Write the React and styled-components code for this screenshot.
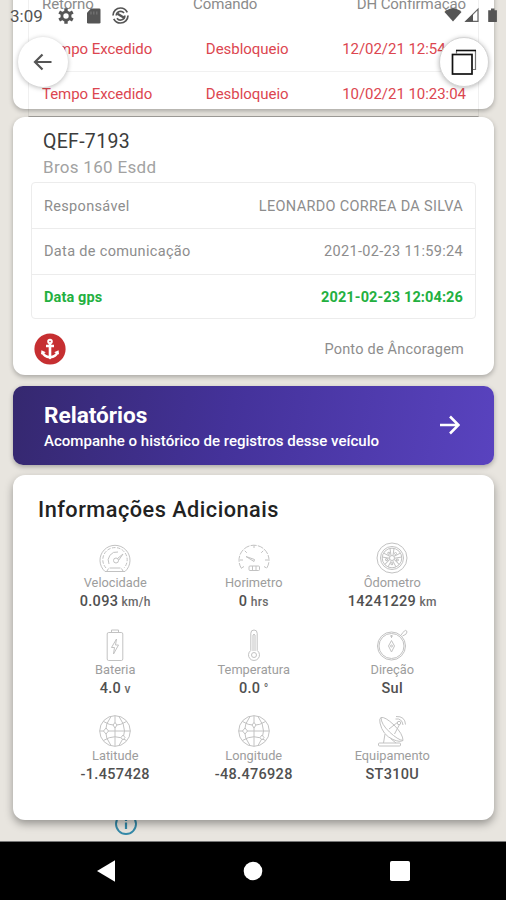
import styled, { createGlobalStyle } from "styled-components";

const history = [
  { type: "Tempo Excedido", command: "Desbloqueio", date: "12/02/21 12:54:39" },
  { type: "Tempo Excedido", command: "Desbloqueio", date: "10/02/21 10:23:04" },
];

const infos = [
  { label: "Velocidade", value: "0.093", unit: "km/h", icon: <SpeedIcon /> },
  { label: "Horimetro", value: "0", unit: "hrs", icon: <HourIcon /> },
  { label: "Ôdometro", value: "14241229", unit: "km", icon: <WheelIcon /> },
  { label: "Bateria", value: "4.0", unit: "v", icon: <BatteryIcon /> },
  { label: "Temperatura", value: "0.0", unit: "°", icon: <ThermoIcon /> },
  { label: "Direção", value: "Sul", icon: <CompassIcon /> },
  { label: "Latitude", value: "-1.457428", icon: <GlobeIcon /> },
  { label: "Longitude", value: "-48.476928", icon: <GlobeIcon /> },
  { label: "Equipamento", value: "ST310U", icon: <DishIcon /> },
];

export default function App() {
  return (
    <>
      <GlobalStyle />
      <Screen>
        <Content>
          <HistoryCard>
            <HistoryTable>
              <HistoryRow $header>
                <span>Retorno</span>
                <span>Comando</span>
                <span>DH Confirmação</span>
              </HistoryRow>
              {history.map((entry) => (
                <HistoryRow key={entry.date}>
                  <span>{entry.type}</span>
                  <span>{entry.command}</span>
                  <span>{entry.date}</span>
                </HistoryRow>
              ))}
            </HistoryTable>
          </HistoryCard>

          <VehicleCard>
            <Plate>QEF-7193</Plate>
            <Model>Bros 160 Esdd</Model>
            <DataBox>
              <DataRow>
                <span>Responsável</span>
                <span>LEONARDO CORREA DA SILVA</span>
              </DataRow>
              <DataRow>
                <span>Data de comunicação</span>
                <span>2021-02-23 11:59:24</span>
              </DataRow>
              <DataRow $active>
                <span>Data gps</span>
                <span>2021-02-23 12:04:26</span>
              </DataRow>
            </DataBox>
            <AnchorRow>
              <AnchorIcon />
              <span>Ponto de Âncoragem</span>
            </AnchorRow>
          </VehicleCard>

          <ReportCard>
            <div>
              <ReportTitle>Relatórios</ReportTitle>
              <ReportText>
                Acompanhe o histórico de registros desse veículo
              </ReportText>
            </div>
            <svg width="20" height="20" viewBox="0 0 20 20" fill="none">
              <path
                d="M0 10H18M10 1.5L18.5 10L10 18.5"
                stroke="#fff"
                strokeWidth="2.6"
              />
            </svg>
          </ReportCard>

          <InfoCard>
            <InfoTitle>Informações Adicionais</InfoTitle>
            <InfoGrid>
              {infos.map((info) => (
                <InfoItem key={info.label}>
                  {info.icon}
                  <InfoLabel>{info.label}</InfoLabel>
                  <InfoValue>
                    {info.value}
                    {info.unit && <small> {info.unit}</small>}
                  </InfoValue>
                </InfoItem>
              ))}
            </InfoGrid>
          </InfoCard>

          <MapInfo width="24" height="24" viewBox="0 0 24 24" fill="none">
            <circle cx="12" cy="12" r="10" stroke="#3489a8" strokeWidth="1.9" />
            <path d="M12 7v2M12 10.5v6.5" stroke="#3489a8" strokeWidth="2.2" />
          </MapInfo>
        </Content>

        <NavBar>
          <svg width="20" height="22" viewBox="0 0 20 22" fill="#fff">
            <path d="M0 11L18 0.3V21.7Z" />
          </svg>
          <svg width="20" height="20" viewBox="0 0 20 20" fill="#fff">
            <circle cx="10" cy="10" r="9.3" />
          </svg>
          <svg width="20" height="20" viewBox="0 0 20 20" fill="#fff">
            <rect width="20" height="20" rx="1.8" />
          </svg>
        </NavBar>

        <StatusBar>
          <Clock>3:09</Clock>
          <StatusIcons />
          <SignalIcons />
        </StatusBar>
        <RoundButton $left="18px" aria-label="Voltar">
          <svg width="20" height="18" viewBox="0 0 20 18" fill="none">
            <path
              d="M18.5 9H2.500M9.500 1.500L2 9L9.500 16.500"
              stroke="#555"
              strokeWidth="2.2"
            />
          </svg>
        </RoundButton>
        <RoundButton $left="439px" $outlined aria-label="Camadas">
          <svg width="26" height="26" viewBox="0 0 26 26" fill="none">
            <path d="M5.500 4.500V1.500M24.500 1.500V20.500H22" stroke="#777" strokeWidth="1.2" />
            <path d="M5 1.500H25" stroke="#111" strokeWidth="1.6" />
            <rect x="1.500" y="5.500" width="19.500" height="19.500" fill="#fff" stroke="#111" strokeWidth="1.7" />
          </svg>
        </RoundButton>
      </Screen>
    </>
  );
}

function StatusIcons() {
  return (
    <svg width="72" height="18" viewBox="0 0 72 18">
      <g stroke="#555" fill="none">
        <circle cx="8" cy="9" r="4.1" strokeWidth="2.8" />
        <path
          d="M8 1.2v3M8 13.8v3M1.2 5.1l2.7 1.5M12.1 11.4l2.7 1.5M1.2 12.9l2.7-1.5M12.1 6.6l2.7-1.5"
          strokeWidth="3.4"
        />
      </g>
      <path
        d="M33 1.5h8.2q1.3 0 1.3 1.3v12.4q0 1.3-1.3 1.3H30.3q-1.3 0-1.3-1.3V5.8Z"
        fill="#555"
      />
      <path d="M33 4.5v3M35.8 4.5v3M38.8 4.5v3" stroke="#777" strokeWidth="1.2" />
      <g stroke="#555" fill="none">
        <circle cx="62.5" cy="8.5" r="7.5" strokeWidth="1.7" strokeDasharray="20 3.5" />
        <path d="M58.3 8.500A4.300 4.300 0 0 1 66 6M66.800 8.500A4.300 4.300 0 0 1 59 11.200" strokeWidth="1.7" />
        <path d="M59.500 6.800L66.500 11" strokeWidth="2.4" />
      </g>
    </svg>
  );
}

function SignalIcons() {
  return (
    <SignalSvg width="54" height="18" viewBox="0 0 54 18">
      <path d="M.5 5Q9-2.500 17.500 5L9 14.500Z" fill="#555" />
      <path d="M34 2.200V14.400H21.800Z" fill="none" stroke="#666" strokeWidth="1.2" />
      <path d="M29 7V14.500H21Z" fill="#555" />
      <path d="M47 1.500h3.500v1.700h2.400v11.300q0 .5-.5.500h-7.700q-.5 0-.5-.5V3.200H47Z" fill="#555" />
    </SignalSvg>
  );
}

function AnchorIcon() {
  return (
    <svg width="32" height="32" viewBox="0 0 32 32" fill="none">
      <circle cx="16" cy="16" r="15.6" fill="#c62f31" />
      <circle cx="16" cy="8.500" r="1.800" stroke="#fff" strokeWidth="2" />
      <path d="M16 10.500V24M12 13H20" stroke="#fff" strokeWidth="2.600" />
      <path d="M8.600 19.500Q10 23.600 16 24.300Q22 23.600 23.400 19.500" stroke="#fff" strokeWidth="2.400" />
      <path d="M7 21.600L7.400 17.200L11.800 19.200ZM25 21.600L24.600 17.200L20.200 19.200ZM13.500 24L16 26.500L18.500 24Z" fill="#fff" />
    </svg>
  );
}

function SpeedIcon() {
  return (
    <LineIcon viewBox="0 0 32 32">
      <path d="M6 29.500A15 15 0 1 1 26 29.500Z" />
      <path d="M7 26A12.200 12.200 0 1 1 25 26" strokeDasharray="3.500 1.500" />
      <path d="M10 22A8.500 8.500 0 0 1 19 10" />
      <circle cx="17" cy="18.500" r="2.500" />
      <path d="M18.500 16.500L24 12L19.500 18.500M10.500 26H21.500M8 29L9.500 26.500M24 29L22.500 26.500" />
    </LineIcon>
  );
}

function HourIcon() {
  return (
    <LineIcon viewBox="0 0 32 32">
      <path d="M3.500 26.500A15 15 0 1 1 28.500 26.500" strokeDasharray="6 1.200" />
      <path d="M16 3v3M6.800 8.800l2 2M25.200 8.800l-2 2M2 18h3M27 18h3M3.500 26l2.500-1.500M28.500 26l-2.500-1.500" />
      <path d="M8 14.500L16.500 17.500L16 19.500Z" />
      <rect x="11" y="24" width="10.500" height="4.500" rx="1" />
      <path d="M14.500 24v4.500M18 24v4.500" />
    </LineIcon>
  );
}

function WheelIcon() {
  const angles = [0, 72, 144, 216, 288];
  return (
    <LineIcon viewBox="0 0 32 32">
      <circle cx="16" cy="16" r="15" />
      <circle cx="16" cy="16" r="11.500" />
      <circle cx="16" cy="16" r="9.800" />
      <circle cx="16" cy="16" r="2.500" />
      {angles.map((angle) => (
        <g key={angle} transform={`rotate(${angle} 16 16)`}>
          <path d="M15 13.500L14 6.500M17 13.500L18 6.500" />
          <circle cx="19.500" cy="11.500" r="1" />
        </g>
      ))}
    </LineIcon>
  );
}

function BatteryIcon() {
  return (
    <LineIcon viewBox="0 0 32 32">
      <rect x="8.200" y="3.500" width="15.600" height="28" rx="1.500" />
      <path d="M12.500 3.500V1H19.500V3.500" />
      <path d="M17.500 10L12.500 18.500H15.500L14.500 25L19.500 16H16.500Z" />
    </LineIcon>
  );
}

function ThermoIcon() {
  return (
    <LineIcon viewBox="0 0 32 32">
      <path d="M12.800 21.500V4.300Q12.800 1 16 1Q19.200 1 19.200 4.300V21.500A5.500 5.500 0 1 1 12.800 21.500Z" />
      <path d="M15 22V6Q16 4.500 17 6V22" />
      <circle cx="16" cy="26" r="2.500" />
    </LineIcon>
  );
}

function CompassIcon() {
  return (
    <LineIcon viewBox="0 0 32 32">
      <circle cx="15.500" cy="17" r="14" />
      <circle cx="15.500" cy="17" r="12.500" />
      <path d="M15.500 11.500L18.500 17L15.500 23L12.500 17ZM15.500 6v3M14 7h3M25 6L27 3.500Q30-.5 31 3Q31 5.500 26.500 7" />
      <circle cx="15.500" cy="17" r="1" />
    </LineIcon>
  );
}

function GlobeIcon() {
  return (
    <LineIcon viewBox="0 0 32 32">
      <circle cx="16" cy="16" r="15.300" />
      <path d="M16 .7V31.300M.7 16H31.300M4.500 6.500Q16 14 27.500 6.500M4.500 25.500Q16 18 27.500 25.500M12 1.500Q1 16 12 30.500M20 1.500Q31 16 20 30.500" />
      <g fill="#fff">
        <path d="M16 7.500L18 10L16 13L14 10ZM7 13L9.500 16L7 19L4.500 16ZM24 20L26 22.500L24 25L22 22.500Z" />
      </g>
    </LineIcon>
  );
}

function DishIcon() {
  return (
    <LineIcon viewBox="0 0 32 32">
      <path d="M5 2.500Q3 3.500 4 8Q6.500 20 17 24.500Q24 27.500 27 25.500Q27 19 18 10Q9 1.500 5 2.500Z" />
      <path d="M5 2.500Q5 9 13.500 17Q22 25 27 25.500M13 14L22 7M18.500 19L23.500 9.500" />
      <circle cx="23" cy="8" r="1.700" />
      <path d="M19.500 4Q26 3 27 10M20 1.500Q29 1 29.500 9.500M9 19L7.500 28M14.500 23.500L20 28" />
      <rect x="2.500" y="28" width="22" height="3" rx="1" />
    </LineIcon>
  );
}

const GlobalStyle = createGlobalStyle`
  * {
    box-sizing: border-box;
  }
  body {
    margin: 0;
    font-family: Roboto, "Liberation Sans", sans-serif;
  }
`;

const Screen = styled.div`
  position: relative;
  display: flex;
  flex-direction: column;
  width: 506px;
  height: 900px;
  overflow: hidden;
  background-color: #e8e5df;
`;

const Content = styled.main`
  display: flex;
  flex-direction: column;
  flex: 1;
  min-height: 0;
  overflow: hidden;
  padding: 0 12px 0 13px;
  border-bottom: 1px solid #777;
`;

const Card = styled.section`
  position: relative;
  flex-shrink: 0;
  border-radius: 12px;
  background-color: #fff;
  box-shadow: 0 2px 5px rgb(0 0 0 / 28%);
`;

const HistoryCard = styled(Card)`
  height: 128px;
  margin-top: -19px;
  margin-bottom: 7.5px;
  padding: 0 15px;
`;

const HistoryTable = styled.div`
  border: 1px solid rgb(0 0 0 / 6%);
  border-top: none;
  border-bottom-color: rgb(0 0 0 / 30%);
`;

const HistoryRow = styled.div`
  display: flex;
  justify-content: space-between;
  align-items: center;
  height: 45px;
  padding: 0 12px 0 13px;
  font-size: 15px;
  letter-spacing: ${(props) => (props.$header ? "-0.1px" : "-0.04px")};
  color: ${(props) => (props.$header ? "#8b8b8b" : "#dc4650")};
  & + & + & {
    border-top: 1px solid #f1f1f1;
  }
`;

const VehicleCard = styled(Card)`
  height: 258.5px;
  padding: 12px 18px 0;
`;

const Plate = styled.h2`
  margin: 0 0 0 12px;
  font-size: 19.5px;
  font-weight: 400;
  line-height: 26px;
  letter-spacing: 0.3px;
  color: #3c3c3c;
`;

const Model = styled.p`
  margin: 0 0 0 12px;
  font-size: 17px;
  line-height: 24px;
  letter-spacing: 0.3px;
  color: #a2a2a2;
`;

const DataBox = styled.div`
  height: 137px;
  margin-top: 3.5px;
  border: 1px solid #ececec;
  border-radius: 4px;
`;

const DataRow = styled.div`
  display: flex;
  justify-content: space-between;
  align-items: center;
  height: 45px;
  padding: 1px 12px 0;
  font-size: 14.5px;
  font-weight: ${(props) => (props.$active ? 700 : 400)};
  letter-spacing: ${(props) => (props.$active ? "0.12px" : "0.33px")};
  color: ${(props) => (props.$active ? "#23b03f" : "#8d8d8d")};
  & + & {
    height: 46px;
    padding-top: 0;
    border-top: 1px solid #ececec;
  }
  & + &:last-child {
    height: 44px;
  }
`;

const AnchorRow = styled.div`
  display: flex;
  justify-content: space-between;
  align-items: center;
  height: 32px;
  margin-top: 14px;
  padding: 0 12px 0 3px;
  font-size: 14.5px;
  letter-spacing: 0.22px;
  color: #8d8d8d;
`;

const ReportCard = styled(Card)`
  display: flex;
  justify-content: space-between;
  align-items: center;
  height: 79px;
  margin: 10.5px 0;
  padding: 0 34px 0 31px;
  border-radius: 10px;
  color: #fff;
  background: linear-gradient(100deg, #35286f 0%, #44329a 45%, #5943bf 100%);
`;

const ReportTitle = styled.h2`
  margin: 3px 0 0;
  font-size: 22.6px;
  font-weight: 700;
  line-height: 28px;
`;

const ReportText = styled.p`
  margin: 0;
  font-size: 15.05px;
  font-weight: 500;
  line-height: 22px;
`;

const InfoCard = styled(Card)`
  z-index: 1;
  height: 344.5px;
  padding: 21px 33px 0;
  box-shadow: 0 4px 9px rgb(0 0 0 / 35%);
`;

const InfoTitle = styled.h2`
  margin: 0 0 0 -8px;
  font-size: 21.7px;
  font-weight: 500;
  line-height: 28px;
  letter-spacing: 0.5px;
  color: #222;
`;

const InfoGrid = styled.div`
  display: grid;
  grid-template-columns: repeat(3, 138.5px);
  grid-auto-rows: 86.7px;
  margin-top: 18px;
`;

const InfoItem = styled.div`
  display: flex;
  flex-direction: column;
  align-items: center;
`;

const InfoLabel = styled.span`
  font-size: 12.8px;
  line-height: 18px;
  letter-spacing: 0;
  color: #9d9d9d;
`;

const InfoValue = styled.strong`
  font-size: 14.5px;
  font-weight: 500;
  line-height: 20px;
  letter-spacing: 0.3px;
  color: #505050;
  small {
    font-size: 12px;
    letter-spacing: 0.3px;
    color: #6a6a6a;
  }
`;

const LineIcon = styled.svg`
  width: 32px;
  height: 32px;
  fill: none;
  stroke: #c2c2c2;
  stroke-width: 1;
`;

const MapInfo = styled.svg`
  flex-shrink: 0;
  margin: -8px 0 0 101px;
`;

const NavBar = styled.nav`
  display: flex;
  justify-content: space-between;
  align-items: center;
  height: 58px;
  padding: 0 96.5px 0 97px;
  background-color: #000;
`;

const StatusBar = styled.header`
  position: absolute;
  z-index: 2;
  top: 0;
  left: 0;
  display: flex;
  align-items: center;
  width: 100%;
  height: 32px;
  padding-left: 10px;
`;

const Clock = styled.span`
  width: 48px;
  font-size: 17px;
  color: #555;
`;

const SignalSvg = styled.svg`
  margin-left: auto;
  margin-right: 8px;
`;

const RoundButton = styled.button`
  position: absolute;
  z-index: 2;
  top: 37px;
  left: ${(props) => props.$left};
  display: flex;
  justify-content: center;
  align-items: center;
  width: 50px;
  height: 50px;
  padding: 0;
  border: ${(props) => (props.$outlined ? "1px solid #d4d4d4" : "none")};
  border-radius: 50%;
  background-color: #fff;
  box-shadow: 0 1px 5px rgb(0 0 0 / 28%);
`;
